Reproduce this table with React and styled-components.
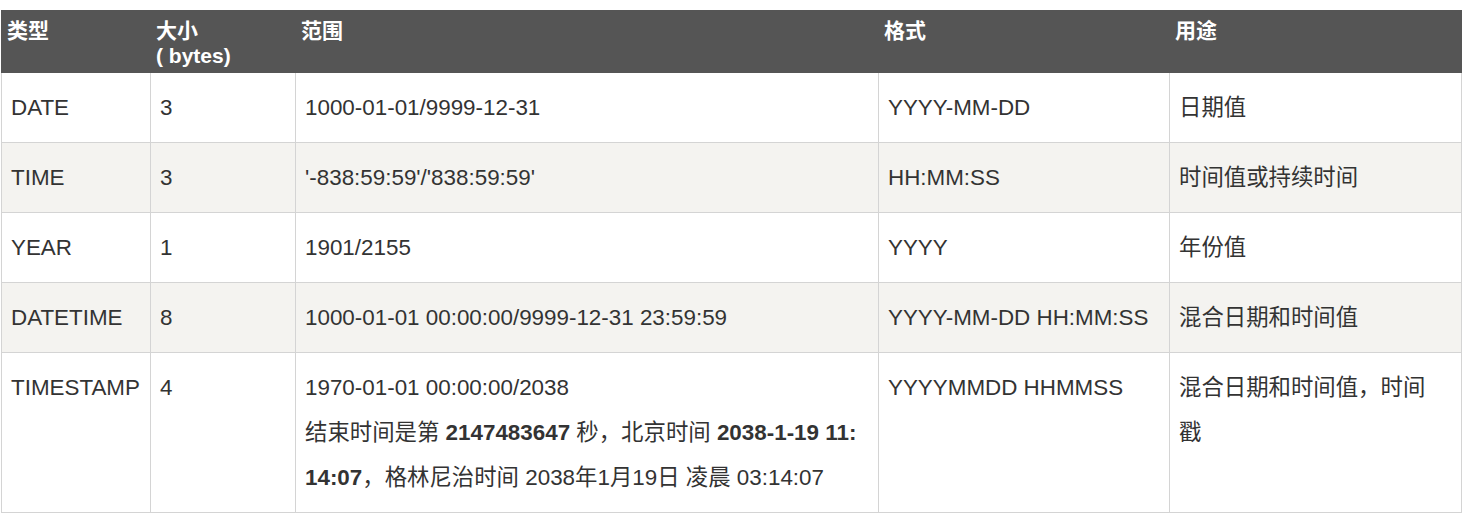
import React from 'react'
import styled, { createGlobalStyle } from 'styled-components'

const rows = [
  { type: 'DATE', size: '3', range: '1000-01-01/9999-12-31', format: 'YYYY-MM-DD', use: '日期值' },
  { type: 'TIME', size: '3', range: "'-838:59:59'/'838:59:59'", format: 'HH:MM:SS', use: '时间值或持续时间' },
  { type: 'YEAR', size: '1', range: '1901/2155', format: 'YYYY', use: '年份值' },
  {
    type: 'DATETIME',
    size: '8',
    range: '1000-01-01 00:00:00/9999-12-31 23:59:59',
    format: 'YYYY-MM-DD HH:MM:SS',
    use: '混合日期和时间值',
  },
  {
    type: 'TIMESTAMP',
    size: '4',
    range: (
      <>
        1970-01-01 00:00:00/2038
        <br />
        结束时间是第 <b>2147483647</b> 秒，北京时间 <b>2038-1-19 11:</b>
        <br />
        <b>14:07</b>，格林尼治时间 2038年1月19日 凌晨 03:14:07
      </>
    ),
    format: 'YYYYMMDD HHMMSS',
    use: (
      <>
        混合日期和时间值，时间
        <br />
        戳
      </>
    ),
  },
]

const widths = [149, 145, 583, 291, 292]

const App = () => {
  return (
    <Page>
      <GlobalStyle />
      <Table>
        <colgroup>
          {widths.map((w, i) => (
            <col key={i} style={{ width: w }} />
          ))}
        </colgroup>
        <thead>
          <tr>
            <Th>类型</Th>
            <Th>
              大小
              <br />( bytes)
            </Th>
            <Th>范围</Th>
            <Th>格式</Th>
            <Th>用途</Th>
          </tr>
        </thead>
        <tbody>
          {rows.map((r) => (
            <Row key={r.type}>
              <Td>{r.type}</Td>
              <Td>{r.size}</Td>
              <Td>{r.range}</Td>
              <Td>{r.format}</Td>
              <Td>{r.use}</Td>
            </Row>
          ))}
        </tbody>
      </Table>
    </Page>
  )
}

const GlobalStyle = createGlobalStyle`
  body {
    margin: 0;
    background: #fff;
    font-family: "Liberation Sans", "Noto Sans CJK SC", sans-serif;
  }
`

const Page = styled.div`
  padding: 10px 0 0 1px;
`

const Table = styled.table`
  width: 1460px;
  table-layout: fixed;
  border-collapse: collapse;
  color: #333;
`

const Th = styled.th`
  background: #555;
  color: #fff;
  border: 1px solid #555;
  text-align: left;
  vertical-align: top;
  font-size: 21px;
  font-weight: bold;
  line-height: 25px;
  padding: 7px 5px 4px;
`

const Row = styled.tr`
  background: #fff;
  &:nth-child(even) {
    background: #f4f3f0;
  }
`

const Td = styled.td`
  border: 1px solid #d4d4d4;
  vertical-align: top;
  font-size: 22.4px;
  line-height: 45px;
  padding: 12px 9px;
  white-space: nowrap;
  b {
    font-weight: bold;
    color: #333;
  }
`

export default App
